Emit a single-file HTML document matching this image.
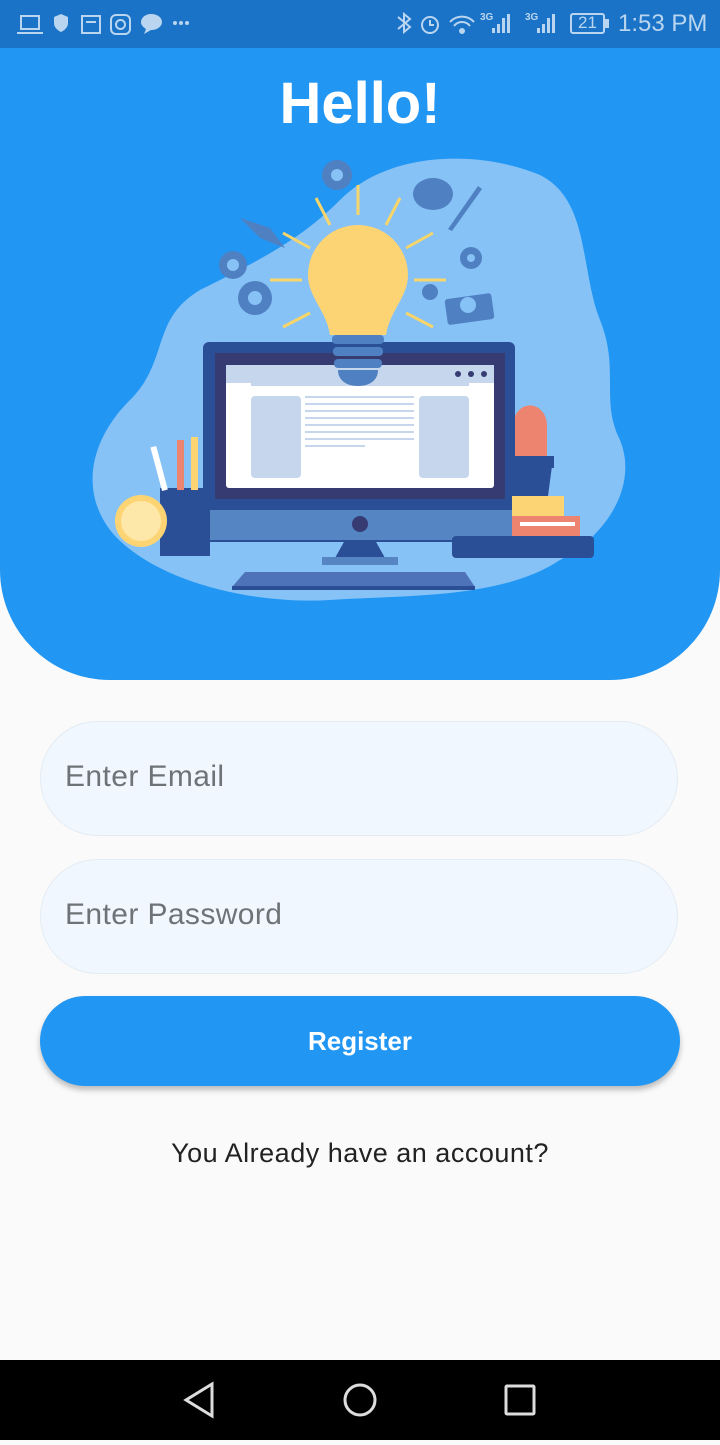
<!DOCTYPE html>
<html><head><meta charset="utf-8"><style>
body{margin:0;width:720px;height:1440px;background:#fafafa;font-family:"Liberation Sans",sans-serif;position:relative;overflow:hidden}
.status{position:absolute;top:0;left:0;width:720px;height:48px;background:#1a73c6;color:#b9d5f0}
.hdr{position:absolute;top:48px;left:0;width:720px;height:632px;background:#2196f3;border-radius:0 0 110px 110px}
h1{position:absolute;top:70px;left:0;width:720px;text-align:center;margin:0;color:#fff;font-size:58px;font-weight:bold}
.inp{position:absolute;left:40px;width:638px;height:115px;border:1px solid #e4ecf3;background:#f0f7fe;border-radius:58px;box-sizing:border-box}
.inp span{position:absolute;left:24px;top:38px;font-size:30px;color:#6e7378;letter-spacing:0.4px}
.btn{position:absolute;left:40px;top:996px;width:640px;height:90px;border-radius:45px;background:#2196f3;box-shadow:0 4px 6px rgba(0,0,0,.25);color:#fff;font-size:26px;font-weight:bold;text-align:center;line-height:90px}
.link{position:absolute;top:1138px;width:720px;text-align:center;font-size:27px;color:#222;letter-spacing:0.5px}
.nav{position:absolute;top:1360px;left:0;width:720px;height:80px;background:#000}
</style></head><body>
<div class="status">
<svg width="720" height="48" style="position:absolute;left:0;top:0" fill="none" stroke="#b9d5f0" stroke-width="2">
<rect x="21" y="16" width="18" height="13"/><line x1="17" y1="33" x2="43" y2="33"/>
<path d="M61 14l7 3v6c0 4-3 7-7 9c-4-2-7-5-7-9v-6z" fill="#b9d5f0" stroke="none"/>
<rect x="82" y="16" width="18" height="17"/><line x1="86" y1="22" x2="96" y2="22"/>
<rect x="111" y="15" width="19" height="19" rx="5"/><circle cx="120.5" cy="24.5" r="4.5"/>
<path d="M151 14c7 0 11 4 11 8s-4 8-11 8l-7 4 2-5c-3-2-5-4-5-7 0-4 4-8 10-8z" fill="#b9d5f0" stroke="none"/>
<g fill="#b9d5f0" stroke="none"><circle cx="175" cy="23" r="2"/><circle cx="181" cy="23" r="2"/><circle cx="187" cy="23" r="2"/>
<rect x="492" y="28" width="3" height="5"/><rect x="497" y="24" width="3" height="9"/><rect x="502" y="18" width="3" height="15"/><rect x="507" y="14" width="3" height="19"/>
<rect x="537" y="28" width="3" height="5"/><rect x="542" y="24" width="3" height="9"/><rect x="547" y="18" width="3" height="15"/><rect x="552" y="14" width="3" height="19"/></g>
<path d="M398 17l12 10-6 5V14l6 5-12 10"/><circle cx="430" cy="25" r="8"/><path d="M430 20v5h4"/>
<path d="M450 22a16 16 0 0 1 24 0M454 26a10 10 0 0 1 16 0"/><circle cx="462" cy="31" r="2" fill="#b9d5f0"/>
<rect x="571" y="14" width="33" height="19" rx="2"/><rect x="605" y="20" width="3" height="7" fill="#b9d5f0"/>
</svg>
<span style="position:absolute;left:480px;top:12px;font-size:10px;font-weight:bold">3G</span>
<span style="position:absolute;left:525px;top:12px;font-size:10px;font-weight:bold">3G</span>
<span style="position:absolute;left:578px;top:13px;font-size:17px">21</span>
<span style="position:absolute;left:618px;top:10px;font-size:24px">1:53 PM</span>
</div>
<div class="hdr"></div>
<h1>Hello!</h1>
<svg width="720" height="680" style="position:absolute;left:0;top:0">
<path d="M340 200C390 150 480 150 540 175C590 200 580 270 600 320C620 370 600 400 620 440C640 490 600 540 560 560C500 600 400 595 330 600C250 605 150 580 110 530C80 490 90 440 130 400C170 360 150 320 200 290C260 260 300 240 340 200Z" fill="#86c2f6"/>
<g fill="#4f80c2"><circle cx="337" cy="175" r="15"/><circle cx="233" cy="265" r="14"/><circle cx="255" cy="298" r="17"/><circle cx="471" cy="258" r="11"/><circle cx="430" cy="292" r="8"/>
<ellipse cx="433" cy="194" rx="20" ry="16"/><path d="M478 186l4 3-30 42-4-2z"/><rect x="446" y="296" width="47" height="26" rx="3" transform="rotate(-8 470 309)"/><path d="M240 218l30 10 15 20-25-10z"/></g>
<g fill="#86c2f6"><circle cx="337" cy="175" r="6"/><circle cx="233" cy="265" r="6"/><circle cx="255" cy="298" r="7"/><circle cx="471" cy="258" r="4"/><circle cx="468" cy="305" r="8"/></g>
<g stroke="#f8d56a" stroke-width="3"><line x1="358" y1="185" x2="358" y2="215"/><line x1="316" y1="198" x2="330" y2="225"/><line x1="400" y1="198" x2="386" y2="225"/><line x1="283" y1="233" x2="310" y2="248"/><line x1="433" y1="233" x2="406" y2="248"/><line x1="270" y1="280" x2="302" y2="280"/><line x1="414" y1="280" x2="446" y2="280"/><line x1="283" y1="327" x2="310" y2="313"/><line x1="433" y1="327" x2="406" y2="313"/></g>
<rect x="203" y="342" width="312" height="200" rx="6" fill="#2a4f96"/>
<rect x="215" y="353" width="290" height="146" fill="#363b72"/>
<rect x="226" y="365" width="268" height="123" rx="3" fill="#fff"/>
<rect x="226" y="365" width="268" height="18" fill="#c6d7ed"/>
<g fill="#363b72"><circle cx="458" cy="374" r="3"/><circle cx="471" cy="374" r="3"/><circle cx="484" cy="374" r="3"/></g>
<rect x="251" y="381" width="218" height="5" fill="#c6d7ed"/>
<rect x="251" y="396" width="50" height="82" rx="4" fill="#c6d7ed"/><rect x="419" y="396" width="50" height="82" rx="4" fill="#c6d7ed"/>
<g fill="#c6d7ed"><rect x="305" y="396" width="109" height="2"/><rect x="305" y="403" width="109" height="2"/><rect x="305" y="410" width="109" height="2"/><rect x="305" y="417" width="109" height="2"/><rect x="305" y="424" width="109" height="2"/><rect x="305" y="431" width="109" height="2"/><rect x="305" y="438" width="109" height="2"/><rect x="305" y="445" width="60" height="2"/></g>
<path d="M203 510h312v24a6 6 0 0 1-6 6H209a6 6 0 0 1-6-6z" fill="#5585c3"/>
<circle cx="360" cy="524" r="8" fill="#363b72"/>
<path d="M345 540h30l10 18h-50z" fill="#2a4f96"/><rect x="322" y="557" width="76" height="8" fill="#5585c3"/>
<path d="M245 572h220l10 15H232z" fill="#4f73b8"/><rect x="232" y="586" width="243" height="4" fill="#2a4f96"/>
<path d="M358 225a50 50 0 0 1 50 50c0 22-18 35-22 60h-56c-4-25-22-38-22-60a50 50 0 0 1 50-50z" fill="#fdd474"/>
<g fill="#4f80c2"><rect x="332" y="335" width="52" height="9" rx="4"/><rect x="333" y="347" width="50" height="9" rx="4"/><rect x="334" y="359" width="48" height="9" rx="4"/></g>
<path d="M338 370h40c0 10-8 16-20 16s-20-6-20-16z" fill="#4f80c2"/>
<rect x="160" y="488" width="50" height="68" fill="#2a4f96"/>
<rect x="156" y="446" width="6" height="45" fill="#fff" transform="rotate(-15 159 468)"/><rect x="177" y="440" width="7" height="50" fill="#ec8470"/><rect x="191" y="437" width="7" height="53" fill="#fdd474"/>
<circle cx="141" cy="521" r="26" fill="#fdd474"/><circle cx="141" cy="521" r="20" fill="#fde7a9"/>
<rect x="452" y="536" width="142" height="22" rx="4" fill="#2a4f96"/>
<rect x="512" y="516" width="68" height="20" fill="#ec8470"/><rect x="520" y="522" width="55" height="4" fill="#fff"/>
<rect x="512" y="496" width="52" height="20" fill="#fdd474"/>
<path d="M514 466h38l-4 30h-34z" fill="#2a4f96"/><rect x="512" y="456" width="42" height="12" fill="#2a4f96"/>
<path d="M515 456v-40a17 20 0 0 1 32 10v30z" fill="#ec8470"/>
</svg>
<div class="inp" style="top:721px"><span>Enter Email</span></div>
<div class="inp" style="top:859px"><span>Enter Password</span></div>
<div class="btn">Register</div>
<div class="link">You Already have an account?</div>
<div class="nav"><svg width="720" height="80" fill="none" stroke="#ddd" stroke-width="3">
<path d="M212 24L186 40l26 16z"/><circle cx="360" cy="40" r="15"/><rect x="506" y="26" width="28" height="28" rx="1"/></svg></div>
</body></html>
